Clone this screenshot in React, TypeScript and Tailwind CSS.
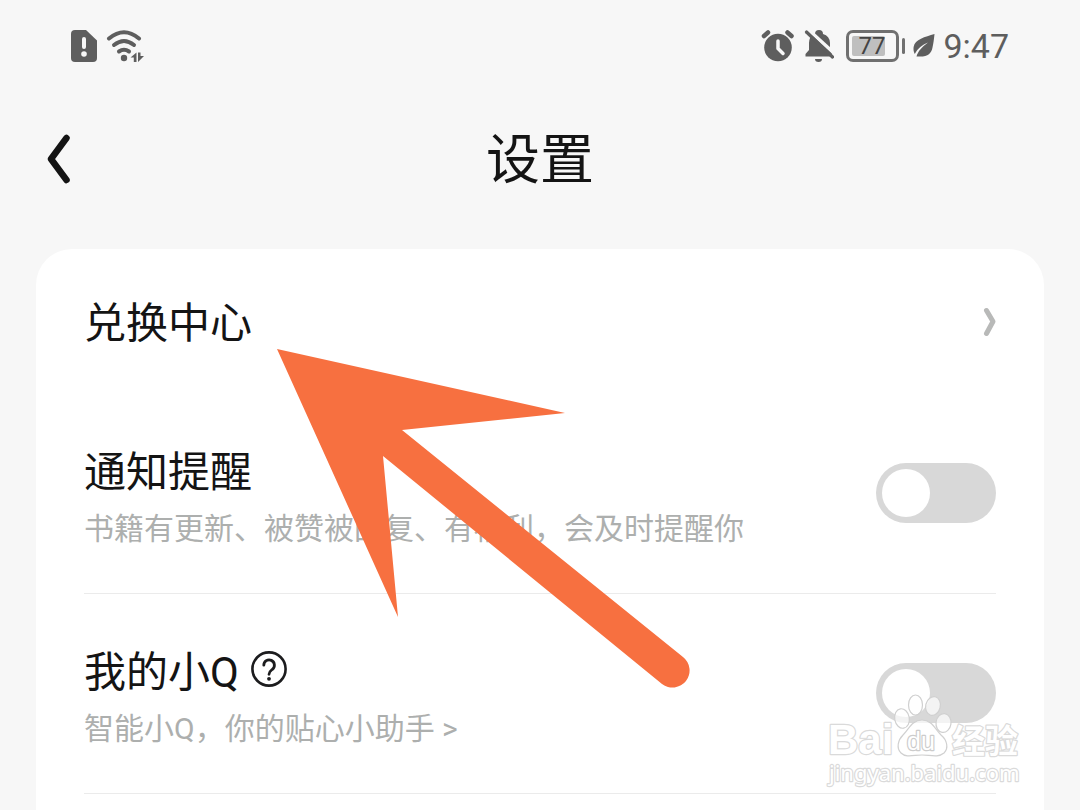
import { useId, useState } from "react";

const StatusBar = () => (
  <div className="flex h-[92px] items-center justify-between px-[71px] text-[#5e5e5e]">
    <div className="flex items-center gap-2">
      <svg width="26" height="34" viewBox="0 0 26 34" aria-hidden="true">
        <path
          d="M4 1H15L26 11.500V29a4 4 0 0 1-4 4H4a4 4 0 0 1-4-4V5a4 4 0 0 1 4-4Z"
          fill="currentColor"
        />
        <path d="M13 10v8" stroke="#f7f7f7" strokeWidth="4" strokeLinecap="round" />
        <circle cx="13" cy="25" r="2.800" fill="#f7f7f7" />
      </svg>
      <svg width="40" height="34" viewBox="0 0 40 34" fill="none" aria-hidden="true">
        <g stroke="currentColor" strokeWidth="4" strokeLinecap="round">
          <path d="M4 9.500Q19 -3 34 9.500" />
          <path d="M9 16Q19 8 29 16" />
          <path d="M14 22.500Q19 19 24 22.500" />
        </g>
        <circle cx="19" cy="29" r="3.200" fill="currentColor" />
        <path d="M25.500 28.500L31.500 23.500V33H28.800V28.500ZM33 23.500V33L39 27H35.500V23.500Z" fill="currentColor" />
      </svg>
    </div>

    <div className="flex items-center">
      <svg width="34" height="34" viewBox="0 0 34 34" fill="none" aria-hidden="true">
        <circle cx="18" cy="18.500" r="13.800" fill="currentColor" />
        <path d="M4 7L8 3.500M27.500 3.500L31.500 7" stroke="currentColor" strokeWidth="4.500" strokeLinecap="round" />
        <path d="M18 12v7.500l5 5" stroke="#f7f7f7" strokeWidth="3.500" strokeLinecap="round" strokeLinejoin="round" />
      </svg>
      <svg className="ml-2" width="32" height="34" viewBox="0 0 32 34" fill="none" aria-hidden="true">
        <path
          d="M3.500 27.500v-2.500l3.500-4V14a9.800 9.800 0 0 1 6-9 3.800 3.800 0 0 1 8 0A9.800 9.800 0 0 1 28 14v7l2 4v2.500Z"
          fill="currentColor"
        />
        <path d="M13 30h7a3.500 3 0 0 1-7 0Z" fill="currentColor" />
        <path d="M5 -0.500L33 25" stroke="#f7f7f7" strokeWidth="3.500" />
        <path d="M4.500 3L30.500 28" stroke="currentColor" strokeWidth="3.200" strokeLinecap="round" />
      </svg>
      <div className="ml-3 flex h-8 w-[53px] items-center rounded-[7px] border-3 border-[#707070] px-[3px]">
        <div className="flex h-5 w-[33px] items-center rounded-[2px] bg-[#bfbfbf] pl-[6px] text-[24px] leading-5 text-[#444444]">
          77
        </div>
      </div>
      <div className="ml-[3px] h-4 w-[3px] rounded-full bg-[#707070]" />
      <svg className="ml-2" width="22" height="24" viewBox="0 0 22 24" fill="none" aria-hidden="true">
        <path
          d="M21.500 0C12 3 2 5 .6 13c-.4 3 .2 5 1.200 7C5 14 9 11 15 8.500 9 13 5 17 3.500 22.500h2c9 .5 13-3 14-9C20.500 9 21 5 21.500 0Z"
          fill="currentColor"
        />
      </svg>
      <span className="ml-2 text-[34px] leading-10">9:47</span>
    </div>
  </div>
);

const Switch = ({ labelledBy }: { labelledBy: string }) => {
  const [checked, setChecked] = useState(false);

  return (
    <input
      type="checkbox"
      role="switch"
      aria-labelledby={labelledBy}
      checked={checked}
      onChange={(e) => setChecked(e.target.checked)}
      className="mt-[18px] h-[60px] w-[120px] shrink-0 cursor-pointer appearance-none rounded-full bg-[#d8d8d8] p-[6px] before:block before:size-12 before:rounded-full before:bg-white before:content-[''] checked:bg-[#2fb670] checked:before:ml-auto"
    />
  );
};

interface SettingRowProps {
  title: string;
  description: string;
  help?: boolean;
}

const SettingRow = ({ title, description, help }: SettingRowProps) => {
  const id = useId();

  return (
    <div className="flex h-[200px] items-start justify-between border-b border-[#ebebeb] pt-[51px]">
      <div>
        <div className="flex h-14 items-start gap-3">
          <span id={id} className="text-[42px] leading-[56px] text-[#141414]">
            {title}
          </span>
          {help && (
            <button type="button" aria-label="帮助" className="mt-[6px] cursor-pointer">
              <svg width="36" height="36" viewBox="0 0 36 36" fill="none">
                <circle cx="18" cy="18" r="16.600" stroke="#1c1c1e" strokeWidth="2.600" />
                <path
                  d="M12.800 14.200a5.300 5.300 0 1 1 8.600 4.100c-2 1.600-3.400 2.400-3.400 5"
                  stroke="#1c1c1e"
                  strokeWidth="2.800"
                  strokeLinecap="round"
                />
                <circle cx="18" cy="27.800" r="1.900" fill="#1c1c1e" />
              </svg>
            </button>
          )}
        </div>
        <p className="text-[30px] leading-[56px] text-[#adafae]">{description}</p>
      </div>
      <Switch labelledBy={id} />
    </div>
  );
};

// Orange pointer drawn over the list
const PointerArrow = () => (
  <svg
    className="pointer-events-none absolute top-[349px] left-[277px]"
    width="413"
    height="340"
    viewBox="277 349 413 340"
    aria-hidden="true"
  >
    <path
      d="M277 349L565 413L402 430L683 657A17 17 0 0 1 662 684L383 456L398 617Z"
      fill="#f77040"
    />
  </svg>
);

const Watermark = () => (
  <svg
    className="pointer-events-none absolute top-[690px] right-[50px]"
    width="210"
    height="106"
    viewBox="820 690 210 106"
    aria-hidden="true"
  >
    <g fill="#ffffff" fillOpacity="0.7" stroke="#d0d0d0" strokeWidth="1.200">
      <ellipse cx="902" cy="718.500" rx="7.300" ry="9.800" transform="rotate(-10 902 718.500)" />
      <ellipse cx="915.500" cy="705" rx="7" ry="10" />
      <ellipse cx="933" cy="706" rx="7.300" ry="9.500" transform="rotate(14 933 706)" />
      <ellipse cx="943.500" cy="723" rx="7.500" ry="9.500" transform="rotate(8 943.500 723)" />
      <path d="M922 720C912 720 909 729 903 735C898 740 896 748 901 753C906 758 914 755 922 755C930 755 938 758 944 753C949 748 947 740 941 735C935 729 932 720 922 720Z" />
    </g>
    <g fill="#ffffff" stroke="#dadada" strokeWidth="2.400" strokeLinejoin="round" paintOrder="stroke">
      <text x="828" y="754" fontSize="42" className="font-['Liberation_Sans',sans-serif] font-bold">
        Bai
      </text>
      <text x="907" y="750" fontSize="25" stroke="#cccccc" className="font-['Liberation_Sans',sans-serif]">
        du
      </text>
      <text x="952" y="753" fontSize="33" className="font-['Noto_Sans_CJK_SC',sans-serif] font-bold">
        经验
      </text>
      <text x="829" y="781" fontSize="22" className="font-['Noto_Sans',sans-serif]">
        jingyan.baidu.com
      </text>
    </g>
  </svg>
);

const App = () => {
  return (
    <div className="relative flex min-h-screen flex-col overflow-hidden bg-[#f7f7f7] font-['Roboto','Noto_Sans_CJK_SC',sans-serif]">
      <StatusBar />

      <header className="grid h-[134px] grid-cols-[1fr_auto_1fr] items-center px-[46px]">
        <button type="button" aria-label="返回" className="w-6 cursor-pointer">
          <svg width="24" height="50" viewBox="0 0 24 50" fill="none">
            <path
              d="M20.500 4L5 25L20.500 46"
              stroke="#141414"
              strokeWidth="6.500"
              strokeLinecap="round"
              strokeLinejoin="round"
            />
          </svg>
        </button>
        <h1 className="pt-1 text-[54px] leading-[80px] text-[#141414]">设置</h1>
      </header>

      <main className="mx-9 mt-[23px] flex-1 rounded-t-[36px] bg-white px-12 pb-4">
        <button
          type="button"
          className="flex h-[145px] w-full cursor-pointer items-center justify-between text-left text-[42px] leading-[56px] text-[#141414]"
        >
          <span className="pt-1">兑换中心</span>
          <svg width="14" height="30" viewBox="0 0 14 30" fill="none" aria-hidden="true">
            <path
              d="M4.500 3.500L11 14.500L4.500 26.500"
              stroke="#b8b9b8"
              strokeWidth="5"
              strokeLinecap="round"
              strokeLinejoin="round"
            />
          </svg>
        </button>
        <SettingRow title="通知提醒" description="书籍有更新、被赞被回复、有福利，会及时提醒你" />
        <SettingRow title="我的小Q" description="智能小Q，你的贴心小助手 >" help />
      </main>

      <PointerArrow />
      <Watermark />
    </div>
  );
};

export default App;
